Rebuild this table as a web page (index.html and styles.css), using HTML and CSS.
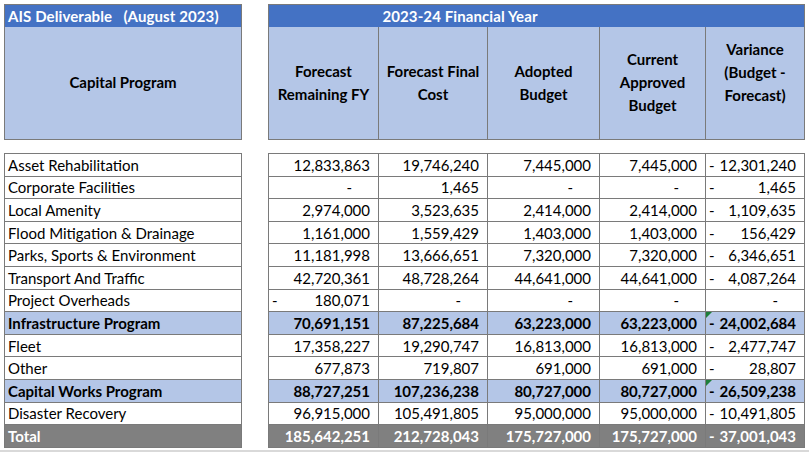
FILE: index.html
```html
<!DOCTYPE html>
<html>
<head>
<meta charset="utf-8">
<link rel="stylesheet" href="styles.css">
</head>
<body>
<div class="sheet">
  <table class="hdr">
    <tr class="bar-row"><th class="bar bar-left">AIS Deliverable   (August 2023)</th></tr>
    <tr class="head-row"><th class="colhead">Capital Program</th></tr>
  </table>
  <table class="hdr">
    <colgroup><col class="c1"><col class="c2"><col class="c3"><col class="c4"><col class="c5"></colgroup>
    <tr class="bar-row"><th class="bar bar-fy" colspan="5">2023-24 Financial Year</th></tr>
    <tr class="head-row">
      <th class="colhead">Forecast<br>Remaining FY</th>
      <th class="colhead">Forecast Final<br>Cost</th>
      <th class="colhead">Adopted<br>Budget</th>
      <th class="colhead">Current<br>Approved<br>Budget</th>
      <th class="colhead var-head">Variance<br>(Budget -<br>Forecast)</th>
    </tr>
  </table>

  <table class="body names">
    <tr><td>Asset Rehabilitation</td></tr>
    <tr><td>Corporate Facilities</td></tr>
    <tr><td>Local Amenity</td></tr>
    <tr><td>Flood Mitigation &amp; Drainage</td></tr>
    <tr><td>Parks, Sports &amp; Environment</td></tr>
    <tr><td>Transport And Traffic</td></tr>
    <tr><td>Project Overheads</td></tr>
    <tr class="sub"><td>Infrastructure Program</td></tr>
    <tr><td>Fleet</td></tr>
    <tr><td>Other</td></tr>
    <tr class="sub"><td>Capital Works Program</td></tr>
    <tr><td>Disaster Recovery</td></tr>
    <tr class="total"><td>Total</td></tr>
  </table>

  <table class="body nums">
    <colgroup><col class="c1"><col class="c2"><col class="c3"><col class="c4"><col class="c5"></colgroup>
    <tr><td>12,833,863</td><td>19,746,240</td><td>7,445,000</td><td>7,445,000</td><td><span class="sign">-</span>12,301,240</td></tr>
    <tr><td class="zero">-</td><td>1,465</td><td class="zero">-</td><td class="zero">-</td><td><span class="sign">-</span>1,465</td></tr>
    <tr><td>2,974,000</td><td>3,523,635</td><td>2,414,000</td><td>2,414,000</td><td><span class="sign">-</span>1,109,635</td></tr>
    <tr><td>1,161,000</td><td>1,559,429</td><td>1,403,000</td><td>1,403,000</td><td><span class="sign">-</span>156,429</td></tr>
    <tr><td>11,181,998</td><td>13,666,651</td><td>7,320,000</td><td>7,320,000</td><td><span class="sign">-</span>6,346,651</td></tr>
    <tr><td>42,720,361</td><td>48,728,264</td><td>44,641,000</td><td>44,641,000</td><td><span class="sign">-</span>4,087,264</td></tr>
    <tr><td><span class="sign">-</span>180,071</td><td class="zero">-</td><td class="zero">-</td><td class="zero">-</td><td class="zero">-</td></tr>
    <tr class="sub"><td>70,691,151</td><td>87,225,684</td><td>63,223,000</td><td>63,223,000</td><td class="flag"><span class="sign">-</span>24,002,684</td></tr>
    <tr><td>17,358,227</td><td>19,290,747</td><td>16,813,000</td><td>16,813,000</td><td><span class="sign">-</span>2,477,747</td></tr>
    <tr><td>677,873</td><td>719,807</td><td>691,000</td><td>691,000</td><td><span class="sign">-</span>28,807</td></tr>
    <tr class="sub"><td>88,727,251</td><td>107,236,238</td><td>80,727,000</td><td>80,727,000</td><td class="flag"><span class="sign">-</span>26,509,238</td></tr>
    <tr><td>96,915,000</td><td>105,491,805</td><td>95,000,000</td><td>95,000,000</td><td><span class="sign">-</span>10,491,805</td></tr>
    <tr class="total"><td>185,642,251</td><td>212,728,043</td><td>175,727,000</td><td>175,727,000</td><td><span class="sign">-</span>37,001,043</td></tr>
  </table>
</div>
<div class="edge"></div>
</body>
</html>
```
FILE: styles.css
```css
body {
  margin: 0;
  background: #fff;
  color: #000;
  font-family: Lato, "Open Sans", sans-serif;
  font-size: 15px;
}
.sheet {
  display: grid;
  grid-template-columns: 238px 536px;
  align-items: start;
  column-gap: 26px;
  row-gap: 13px;
  padding: 4px 0 0 4px;
}
.edge {
  height: 3px;
  margin-top: 2px;
  background: #d9d9d9;
}
table {
  border-collapse: collapse;
  table-layout: fixed;
  width: 100%;
}
th, td {
  border: 1px solid #7a7a7a;
  white-space: nowrap;
  overflow: hidden;
  padding: 0;
}
.c1 { width: 110px; }
.c2 { width: 109px; }
.c3 { width: 112px; }
.c4 { width: 106px; }
.c5 { width: 99px; }

.bar-row {
  height: 22px;
}
.head-row {
  height: 113px;
}
.bar {
  background: #4472c4;
  color: #fff;
  font-weight: bold;
  line-height: 18px;
  border-bottom: none;
  white-space: pre;
  letter-spacing: 0.1px;
}
.bar-left {
  text-align: left;
  padding-left: 3px;
}
.bar-fy {
  text-align: center;
  padding-right: 153px;
}
.colhead {
  background: #b4c6e7;
  border-top: none;
  font-weight: bold;
  text-align: center;
  vertical-align: middle;
  line-height: 23px;
}
.var-head {
  padding-bottom: 20px;
}

.body tr {
  height: 22.6px;
}
.body td {
  padding: 0 8px 0 3px;
  line-height: 18px;
}
.nums td {
  text-align: right;
}
.nums td.zero {
  padding-right: 26px;
}
.sign {
  float: left;
}
.sub td {
  background: #b4c6e7;
  font-weight: bold;
}
.total td {
  background: #808080;
  color: #fff;
  font-weight: bold;
}
.flag {
  position: relative;
}
.flag::before {
  content: "";
  position: absolute;
  left: 0;
  top: 0;
  border-top: 6px solid #1d7f3a;
  border-right: 6px solid transparent;
}
```
